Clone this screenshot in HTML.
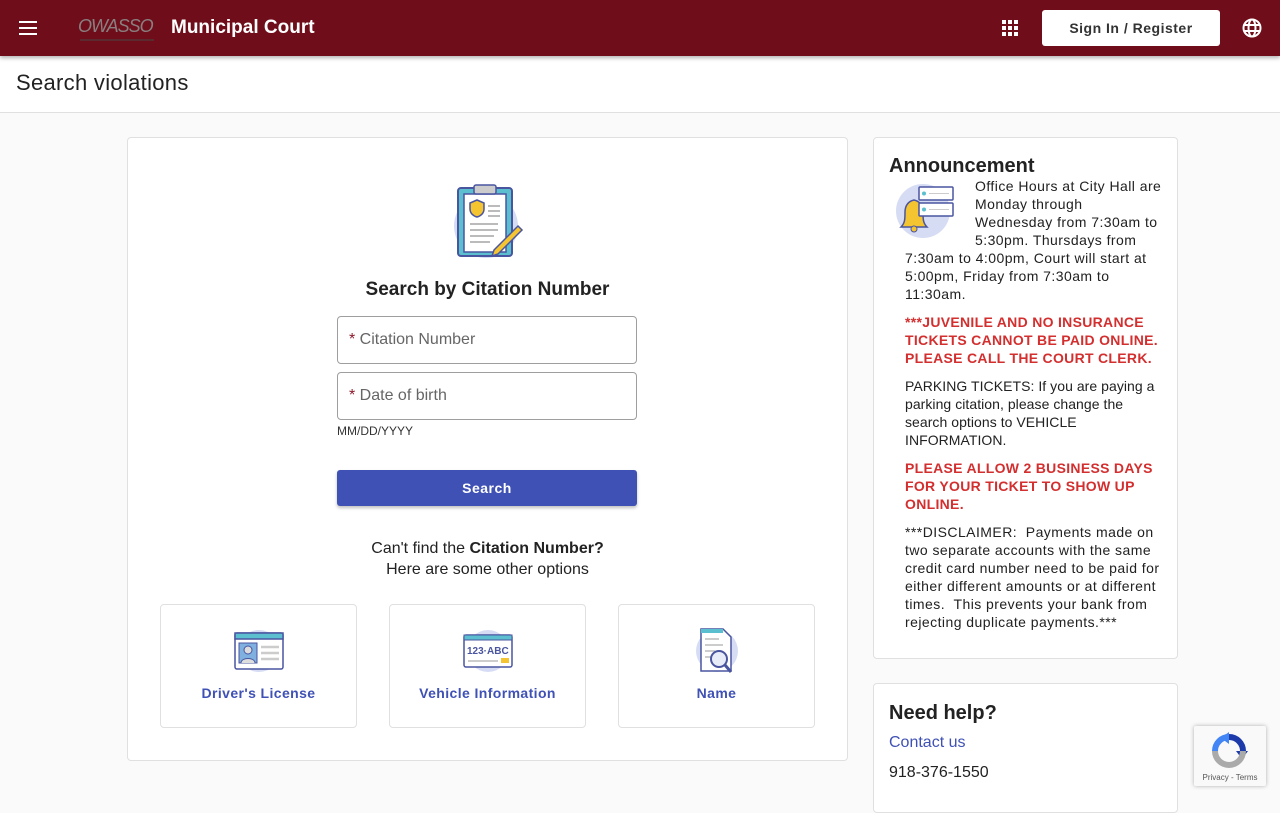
<!DOCTYPE html>
<html><head><meta charset="utf-8"><style>
*{box-sizing:border-box;margin:0;padding:0}
body{width:1280px;height:800px;overflow:hidden;background:#fafafa;font-family:"Liberation Sans",sans-serif;color:#212121;position:relative}
.hdr{position:absolute;left:0;top:0;width:1280px;height:56px;background:#6f0e1a;box-shadow:0 2px 4px rgba(0,0,0,.3);z-index:2}
.sub{position:absolute;left:0;top:56px;width:1280px;height:57px;background:#fff;border-bottom:1px solid #e0e0e0}
.card{position:absolute;background:#fff;border:1px solid #e0e0e0;border-radius:4px}
.abs{position:absolute}
.inp{position:absolute;left:337px;width:300px;height:48px;border:1px solid #9e9e9e;border-radius:4px;font-size:16px;color:#666;padding:14px 11px}
.inp b{color:#8b1a2b;font-weight:normal}
.opt{position:absolute;top:604px;width:197px;height:124px;border:1px solid #e0e0e0;border-radius:4px;background:#fff;text-align:center}
.opt span{position:absolute;left:0;right:0;top:80px;font-size:14px;font-weight:bold;color:#3f51b5;letter-spacing:.4px}
.opt svg{position:absolute;left:72px;top:20px}
.ann p{font-size:14px;line-height:18px;margin-bottom:10px;letter-spacing:.45px}
.red{color:#d32f2f;font-weight:bold;letter-spacing:.3px!important}
</style></head><body>
<div class="hdr">
<svg class="abs" style="left:18px;top:18px" width="20" height="20" viewBox="0 0 20 20"><path d="M1 4h18M1 10h18M1 16h18" stroke="#fff" stroke-width="2"/></svg>
<div class="abs" style="left:78px;top:16px;font-family:'Liberation Sans',sans-serif;font-style:italic;font-size:18px;color:#8a7f80;letter-spacing:-1px">OWASSO</div>
<div class="abs" style="left:80px;top:39px;width:74px;height:2px;background:#5a2a2e"></div>
<div class="abs" style="left:171px;top:17px;font-size:19px;font-weight:bold;color:#fff">Municipal Court</div>
<svg class="abs" style="left:1002px;top:20px" width="16" height="16" viewBox="0 0 16 16" fill="#fff"><rect x="0" y="0" width="4" height="4"/><rect x="6" y="0" width="4" height="4"/><rect x="12" y="0" width="4" height="4"/><rect x="0" y="6" width="4" height="4"/><rect x="6" y="6" width="4" height="4"/><rect x="12" y="6" width="4" height="4"/><rect x="0" y="12" width="4" height="4"/><rect x="6" y="12" width="4" height="4"/><rect x="12" y="12" width="4" height="4"/></svg>
<div class="abs" style="left:1042px;top:10px;width:178px;height:36px;background:#fff;border-radius:3px;text-align:center;line-height:36px;font-size:14px;font-weight:bold;color:#333;letter-spacing:.5px">Sign In / Register</div>
<svg class="abs" style="left:1242px;top:18px" width="20" height="20" viewBox="0 0 20 20" fill="none" stroke="#fff" stroke-width="2"><circle cx="10" cy="10" r="8.5"/><ellipse cx="10" cy="10" rx="3.5" ry="8.5"/><path d="M2 7h16M2 13h16"/></svg>
</div>
<div class="sub"><div class="abs" style="left:16px;top:14px;font-size:22px;color:#222;letter-spacing:.3px">Search violations</div></div>

<div class="card" style="left:127px;top:137px;width:721px;height:624px"></div>
<svg class="abs" style="left:450px;top:182px" width="76" height="80" viewBox="0 0 76 80">
<circle cx="36" cy="44" r="32" fill="#d6dcf4"/>
<rect x="8" y="6" width="54" height="68" rx="3" fill="#5bbfcf" stroke="#4a55a0" stroke-width="2"/>
<rect x="14" y="12" width="42" height="58" fill="#fff" stroke="#4a55a0" stroke-width="1.5"/>
<rect x="24" y="3" width="22" height="9" rx="2" fill="#ccc" stroke="#4a55a0" stroke-width="1.5"/>
<path d="M20 21l7-3 7 3v6c0 4-3 7-7 8-4-1-7-4-7-8z" fill="#f5c431" stroke="#4a55a0" stroke-width="1.5"/>
<path d="M38 24h12M38 29h12M38 34h12M20 42h28M20 48h28M20 54h24M20 60h20" stroke="#bbb" stroke-width="2"/>
<path d="M68 44l4 4-24 24-6 2 2-6z" fill="#f5c431" stroke="#4a55a0" stroke-width="1.5"/>
</svg>
<div class="abs" style="left:127px;width:721px;top:279px;text-align:center;font-size:19px;font-weight:bold;color:#222">Search by Citation Number</div>
<div class="inp" style="top:316px"><b>*</b> Citation Number</div>
<div class="inp" style="top:372px"><b>*</b> Date of birth</div>
<div class="abs" style="left:337px;top:424px;font-size:12px;color:#333">MM/DD/YYYY</div>
<div class="abs" style="left:337px;top:470px;width:300px;height:36px;background:#3f51b5;border-radius:3px;box-shadow:0 2px 3px rgba(0,0,0,.25);color:#fff;text-align:center;line-height:36px;font-size:14px;font-weight:bold;letter-spacing:.5px">Search</div>
<div class="abs" style="left:127px;width:721px;top:538px;text-align:center;font-size:16px;line-height:21px;color:#222">Can't find the <b>Citation Number?</b><br>Here are some other options</div>

<div class="opt" style="left:160px"><svg width="52" height="56" viewBox="0 0 52 56"><circle cx="26" cy="26" r="21" fill="#d6dcf4"/><rect x="2" y="8" width="48" height="36" rx="2" fill="#fff" stroke="#4a55a0" stroke-width="1.5"/><rect x="2" y="8" width="48" height="6" fill="#5bbfcf" stroke="#4a55a0" stroke-width="1.5"/><rect x="6" y="18" width="18" height="20" fill="#7fb0e0" stroke="#4a55a0"/><circle cx="15" cy="25" r="4" fill="#ddd" stroke="#4a55a0"/><path d="M8 38c0-6 14-6 14 0" fill="#ddd" stroke="#4a55a0"/><path d="M28 22h18M28 28h18M28 34h18" stroke="#ccc" stroke-width="2.5"/></svg><span>Driver's License</span></div>
<div class="opt" style="left:389px"><svg width="52" height="56" viewBox="0 0 52 56"><circle cx="26" cy="26" r="21" fill="#d6dcf4"/><rect x="2" y="10" width="48" height="32" rx="2" fill="#fff" stroke="#4a55a0" stroke-width="1.5"/><rect x="2" y="10" width="48" height="5" fill="#5bbfcf" stroke="#4a55a0" stroke-width="1"/><text x="5" y="29" font-size="10" font-family="Liberation Sans" font-weight="bold" fill="#4a55a0">123·ABC</text><path d="M6 36h30" stroke="#ccc" stroke-width="2"/><rect x="39" y="33" width="8" height="5" fill="#f5c431"/></svg><span>Vehicle Information</span></div>
<div class="opt" style="left:618px"><svg width="52" height="56" viewBox="0 0 52 56"><circle cx="26" cy="26" r="21" fill="#d6dcf4"/><path d="M10 4h22l8 8v34H10z" fill="#fff" stroke="#4a55a0" stroke-width="1.5"/><rect x="10" y="4" width="22" height="4" fill="#5bbfcf"/><path d="M14 14h14M14 20h18M14 26h10M14 32h8" stroke="#ccc" stroke-width="2"/><circle cx="28" cy="34" r="8" fill="#e8ecf8" stroke="#4a55a0" stroke-width="2"/><path d="M34 40l6 7" stroke="#4a55a0" stroke-width="3"/></svg><span>Name</span></div>

<div class="card ann" style="left:873px;top:137px;width:305px;height:522px;padding:39px 14px 0 31px">
<div class="abs" style="left:15px;top:17px;font-size:20px;font-weight:bold;color:#222">Announcement</div>
<svg style="float:left;margin:0 20px 0 -10px" width="60" height="72" viewBox="0 0 60 72"><g transform="translate(0,6)"><circle cx="28" cy="28" r="27" fill="#d6dcf4"/><path d="M6 44c4-4 4-8 4-15 0-7 4-11 9-12 5 1 9 5 9 12 0 7 0 11 4 15z" fill="#f5c431" stroke="#4a55a0" stroke-width="1.5"/><circle cx="19" cy="46" r="3" fill="#f5c431" stroke="#4a55a0"/><rect x="24" y="4" width="34" height="13" rx="1" fill="#fff" stroke="#4a55a0" stroke-width="1.5"/><rect x="24" y="20" width="34" height="13" rx="1" fill="#fff" stroke="#4a55a0" stroke-width="1.5"/><circle cx="29" cy="10.5" r="2" fill="#5bbfcf"/><circle cx="29" cy="26.5" r="2" fill="#5bbfcf"/><path d="M34 10.5h20M34 26.5h20" stroke="#ccc"/></g></svg>
<p>Office Hours at City Hall are Monday through Wednesday from 7:30am to 5:30pm. Thursdays from 7:30am to 4:00pm, Court will start at 5:00pm, Friday from 7:30am to 11:30am.</p>
<p class="red" style="clear:both">***JUVENILE AND NO INSURANCE TICKETS CANNOT BE PAID ONLINE. PLEASE CALL THE COURT CLERK.</p>
<p style="letter-spacing:.05px">PARKING TICKETS: If you are paying a parking citation, please change the search options to VEHICLE INFORMATION.</p>
<p class="red">PLEASE ALLOW 2 BUSINESS DAYS FOR YOUR TICKET TO SHOW UP ONLINE.</p>
<p>***DISCLAIMER:&nbsp; Payments made on two separate accounts with the same credit card number need to be paid for either different amounts or at different times.&nbsp; This prevents your bank from rejecting duplicate payments.***</p>
</div>

<div class="card" style="left:873px;top:683px;width:305px;height:130px">
<div class="abs" style="left:15px;top:18px;font-size:20px;font-weight:bold;color:#222">Need help?</div>
<div class="abs" style="left:15px;top:50px;font-size:16px;color:#3f51b5">Contact us</div>
<div class="abs" style="left:15px;top:80px;font-size:16px;color:#222">918-376-1550</div>
</div>

<div class="abs" style="left:1194px;top:726px;width:72px;height:60px;background:#f9f9f9;box-shadow:0 0 4px rgba(0,0,0,.3);border-radius:2px">
<svg class="abs" style="left:16px;top:6px" width="38" height="38" viewBox="0 0 38 38"><path d="M19 5a14 14 0 0 1 14 14" fill="none" stroke="#1c3aa9" stroke-width="6"/><path d="M26 19h12l-6 8z" fill="#1c3aa9"/><path d="M5 19a14 14 0 0 1 14-14" fill="none" stroke="#4285f4" stroke-width="6"/><path d="M19 0v12l-8-6z" fill="#4285f4"/><path d="M33 19a14 14 0 0 1-28 0" fill="none" stroke="#aaa" stroke-width="6"/></svg>
<div class="abs" style="left:0;right:0;top:47px;text-align:center;font-size:8px;color:#555">Privacy - Terms</div>
</div>
</body></html>
